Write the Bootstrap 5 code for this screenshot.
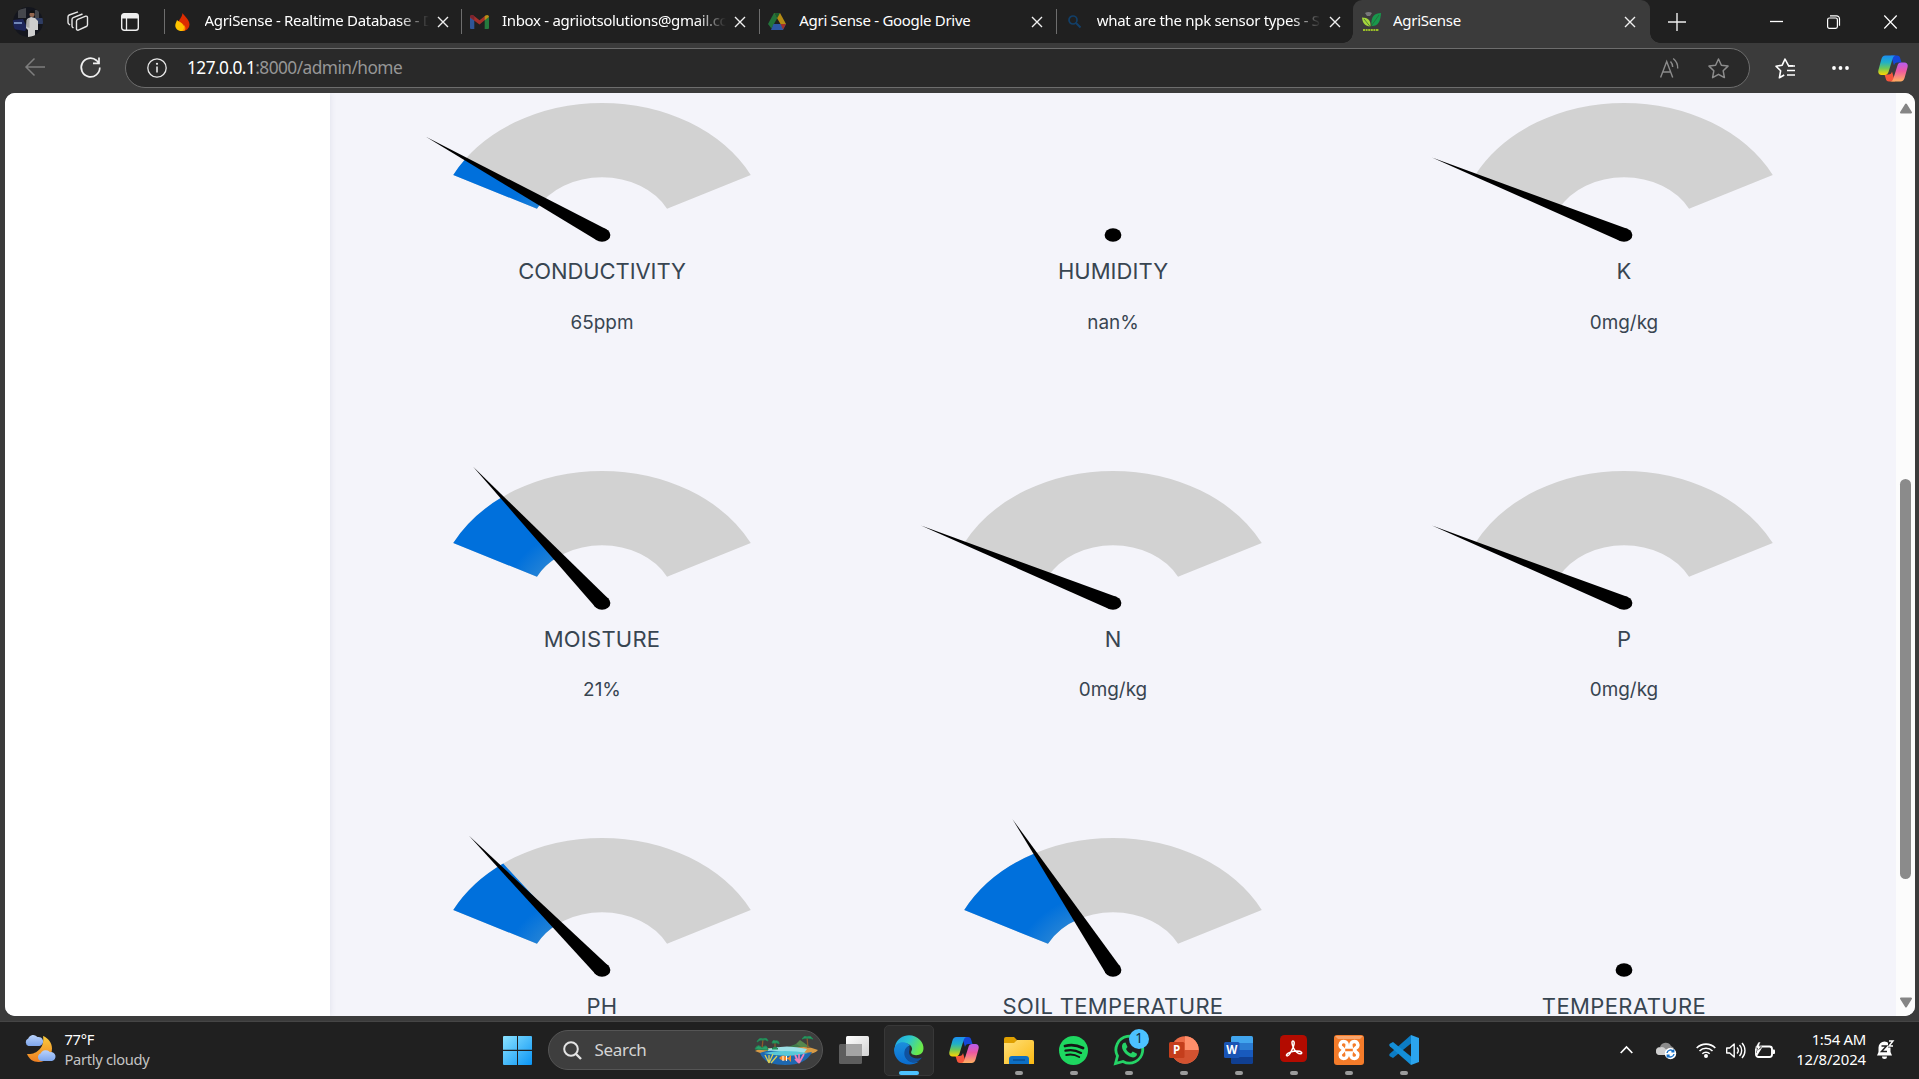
<!DOCTYPE html>
<html lang="en">
<head>
<meta charset="utf-8">
<title>AgriSense</title>
<link href="https://cdn.jsdelivr.net/npm/bootstrap@5.3.0/dist/css/bootstrap.min.css" rel="stylesheet">
<style>
html,body{height:100%;overflow:hidden}
body{font-family:"Noto Sans","Open Sans",sans-serif;background:#3b3b3b;color:#fff}
svg{display:block;flex:none;overflow:visible}
.desk{width:1919px;height:1079px}
.titlebar{height:43px;background:#202020}
.ctr{display:flex;align-items:center;justify-content:center;flex:none}
.tight{letter-spacing:-.3px}
.tab{width:297.4px;height:43px;padding-left:9px;font-size:15px;flex:none;position:relative}
.tab::before{content:"";position:absolute;left:0;top:9px;width:1px;height:25px;background:#6e6e6e}
.tab .fav{width:19px;margin-right:12.5px}
.tab .ttl{width:224px;white-space:nowrap;overflow:hidden;line-height:20px;margin-top:-3px;letter-spacing:-.3px}
.tab.fade-end .ttl{-webkit-mask-image:linear-gradient(90deg,#000 195px,transparent 224px);mask-image:linear-gradient(90deg,#000 195px,transparent 224px)}
.tab .cls{width:26px;margin-left:1px}
.tab.current{background:#3b3b3b;border-radius:9px 9px 0 0;width:297px;margin-left:-1px}
.tab.current::before{display:none}
.tab.current .cls{margin-left:0}
.tab.current .curve{position:absolute;bottom:0;width:10px;height:10px}
.curve.l{left:-10px;background:radial-gradient(circle at 0 0,transparent 9.5px,#3b3b3b 10px)}
.curve.r{right:-10px;background:radial-gradient(circle at 100% 0,transparent 9.5px,#3b3b3b 10px)}
.toolbar{height:50px;background:#3b3b3b;padding-top:5px}
.address{width:1625px;height:40px;flex:none;border:1px solid #6d6d6d;border-radius:20px;background:#292929;font-size:17.3px}
.address .port{color:#969696}
.page{margin:0 4px 0 5px;height:923px;border-radius:10px;background:#f4f4fa;overflow:hidden;color:#384551;font-family:Inter,"Liberation Sans",sans-serif}
.sidebar{width:325px;background:#fff;flex:none;box-shadow:0 0 6px rgba(80,90,120,.13);position:relative}
.main{width:1566px;padding:0 16.5px;height:923px;overflow:hidden}
.cell{height:367.5px}
.cell h5{font-size:22px;line-height:27px;font-weight:400;margin:15px 0 23.5px;color:#384551}
.cell p{font-size:18.9px;line-height:27px;margin:0}
.sbar{width:19px;background:#fcfcfc;padding:10px 0 8px}
.thumb{width:11px;height:400px;border-radius:5.5px;background:#8b8b8b;margin-top:365px}
.taskbar{height:58px;margin-top:5px;background:#202020;border-top:1px solid #454545;padding-bottom:1px}
.weather{width:490px;padding-left:24px;font-size:14.7px;line-height:20px}
.weather small{color:#c4c4c4;font-size:14.7px}
.lift{margin-top:-3px}
.app{width:55px;height:56px;position:relative}
.app.run::after{content:"";position:absolute;left:23.5px;bottom:3px;width:8px;height:4px;border-radius:2px;background:#9b9b9b}
.app.on::before{content:"";position:absolute;inset:3px 2.5px 2px;border-radius:5px;background:#2c2c2c;border:1px solid #383838}
.app.on::after{width:20px;left:17.5px;background:#4cc2ff}
.app svg{position:relative}
.count{position:absolute;left:28px;top:7px;width:20px;height:20px;border-radius:50%;background:#4cc2ff;color:#102a3a;font-size:13.5px;line-height:19px;text-align:center}
.search{width:275px;height:40px;margin:0 3px;border-radius:20px;background:#3e3e3e;border:1px solid #555;padding:0 4px 0 14px;color:#d4d4d4;font-size:16.5px}
.clock{width:83px;font-size:14.9px;line-height:20px;text-align:right;white-space:nowrap}
</style>
</head>
<body>
<svg width="0" height="0" class="position-absolute">
<defs>
<radialGradient id="fillg" gradientUnits="userSpaceOnUse" cx="0" cy="0" r="166"><stop offset=".42" stop-color="#2483d6"/><stop offset=".6" stop-color="#0070dc"/></radialGradient>
<linearGradient id="ca" x1="0" y1="0" x2="0" y2="1"><stop stop-color="#1c8df0"/><stop offset=".35" stop-color="#20b0c8"/><stop offset=".65" stop-color="#6cc85a"/><stop offset="1" stop-color="#ffd400"/></linearGradient>
<linearGradient id="cb" x1="0" y1="0" x2="0" y2="1"><stop stop-color="#b65cf0"/><stop offset=".45" stop-color="#ee58a0"/><stop offset="1" stop-color="#ffb060"/></linearGradient>
<linearGradient id="wa" gradientUnits="userSpaceOnUse" x1="0" y1="0" x2="29" y2="29"><stop stop-color="#8be2ff"/><stop offset="1" stop-color="#0a95f5"/></linearGradient>
<linearGradient id="ea" x1="0" y1="0" x2="1" y2=".4"><stop stop-color="#1f9fe8"/><stop offset=".5" stop-color="#2bc6cf"/><stop offset="1" stop-color="#6bea4a"/></linearGradient>
<linearGradient id="eb" x1="0" y1="0" x2="0" y2="1"><stop stop-color="#1b8fdc"/><stop offset="1" stop-color="#0a6cd0"/></linearGradient>
<linearGradient id="fa" x1="0" y1="0" x2="1" y2="1"><stop stop-color="#ffe07a"/><stop offset="1" stop-color="#fbb912"/></linearGradient>
<linearGradient id="ma" x1="0" y1="0" x2="0" y2="1"><stop stop-color="#f9cb3c"/><stop offset="1" stop-color="#ee7f22"/></linearGradient>
<linearGradient id="cl" x1="0" y1="0" x2="0" y2="1"><stop stop-color="#b9d2fb"/><stop offset="1" stop-color="#7ea6ec"/></linearGradient>
<linearGradient id="tv" x1="0" y1="0" x2="1" y2="1"><stop stop-color="#fff"/><stop offset="1" stop-color="#d2d2d2"/></linearGradient>
<symbol id="x" viewBox="0 0 12 12"><path d="M1 1l10 10M11 1L1 11" stroke="#f0f0f0" stroke-width="1.4" fill="none"/></symbol>
<symbol id="copilot" viewBox="0 0 30 28">
<path d="M13 1h6c2 0 2.700 1 3.200 2.700L23.500 8h-4c-2 0-3 1-3.500 3z" fill="#1547d8"/>
<path d="M17 27h-6c-2 0-2.700-1-3.200-2.700L6.500 20h4c2 0 3-1 3.500-3z" fill="#f5553c"/>
<path d="M7.500 1H18c-2 0-2.800 1.300-3.400 3.300l-4 13c-.6 2-1.800 3.200-3.900 3.200H3.500C.8 20.500-.3 18 .5 15.200L3.300 5C4 2.300 5.200 1 7.500 1z" fill="url(#ca)"/>
<path d="M22.500 27H12c2 0 2.800-1.300 3.400-3.300l4-12.500C20 9.200 21.200 8 23.300 8h3.200c2.700 0 3.800 2.300 3 5l-2.800 10c-.7 2.700-1.900 4-4.200 4z" fill="url(#cb)"/></symbol>
</defs>
</svg>

<div class="desk d-flex flex-column">
<header class="titlebar d-flex align-items-center">
  <div class="ctr" style="width:55px"><svg width="30" height="30" viewBox="0 0 30 30"><clipPath id="av"><circle cx="15" cy="15" r="15"/></clipPath><g clip-path="url(#av)"><path d="M0 0h30v30H0z" fill="#14161e"/><path d="M5 3l8-2v10H5zM22 3h4v9h-4z" fill="#45474c"/><path d="M0 13l10-1 4 8-2 4-12-2z" fill="#1d2558"/><path d="M1 15h8v2H1z" fill="#7087b8"/><path d="M23 11h7v6h-7z" fill="#2f3d63"/><path d="M14 12l4-2 4 1 3 3 0 9h-3v7h-7v-7l-2-2z" fill="#cfcfcf"/><path d="M13.500 13l3-2v10l-3-1z" fill="#a8a8a8"/><circle cx="19" cy="7.500" r="2.500" fill="#93674f"/><path d="M16.500 6a2.500 2.500 0 0 1 5 0z" fill="#111"/></g></svg></div>
  <div class="ctr" style="width:45px"><svg width="22" height="21" viewBox="0 0 22 21" fill="none" stroke="#e6e6e6" stroke-width="1.400"><path d="M9.500 10.200a2 2 0 0 1 1.200-1.800l8-3.200a1.300 1.300 0 0 1 1.800 1.200v7.300a2 2 0 0 1-1.200 1.800l-8 3.600a1.300 1.300 0 0 1-1.800-1.200zM6.500 17l-1-.8a2 2 0 0 1-.5-1.400V8.500a2 2 0 0 1 1.200-1.800L15.500 3M3 14l-1.200-1A2 2 0 0 1 1 11.300V5.800A2 2 0 0 1 2.200 4L11 .8"/></svg></div>
  <div class="ctr" style="width:64px;padding-right:4px"><svg width="18" height="18" viewBox="0 0 18 18"><rect x=".7" y=".7" width="16.600" height="16.600" rx="2.500" fill="none" stroke="#eee" stroke-width="1.400"/><path d="M.7 5.500V3A2.400 2.400 0 0 1 3 .7h12A2.400 2.400 0 0 1 17.300 3v2.500z" fill="#eee"/><path d="M5.500 5v12" stroke="#eee" stroke-width="1.300"/></svg></div>

  <div class="tab fade-end d-flex align-items-center"><div class="fav ctr"><svg width="15" height="18" viewBox="0 0 15 18"><path d="M7.500 0C8 2 14.500 6 14.500 11.500A6.500 6.500 0 0 1 7.500 18C4 18 2 14 3 10c.5-3 4-5 4.500-10z" fill="#dd2c00"/><path d="M2 7c1 1.500 5 2 7 6 1 2 .5 4-1.500 5C3 18.500 0 15.500.3 12 .5 10 1.500 9 2 7z" fill="#ffc400"/><path d="M6 10c3 1 4.500 4 1.500 8l2-.3c2-2 1-6-3.500-7.700z" fill="#ff9100"/></svg></div><span class="ttl">AgriSense - Realtime Database - Data</span><div class="cls ctr"><svg width="12" height="12"><use href="#x"/></svg></div></div>
  <div class="tab fade-end d-flex align-items-center"><div class="fav ctr"><svg width="19" height="14" viewBox="0 0 19 14"><path d="M0 2v11q0 1 1 1h3.300V5z" fill="#2f5596"/><path d="M19 2v11q0 1-1 1h-3.300V5z" fill="#257a3e"/><path d="M0 2C0 0 2-.6 3.500.6l6 4.700 6-4.700v4L9.500 9.500 0 2.500z" fill="#a3302a"/><path d="M14.700 5.300V1.200l.8-.6C17-.6 19 0 19 2z" fill="#b88f16"/><path d="M0 2C0 0 2-.6 3.500.6l.8.600v4.100z" fill="#7b2430"/></svg></div><span class="ttl">Inbox - agriiotsolutions@gmail.com</span><div class="cls ctr"><svg width="12" height="12"><use href="#x"/></svg></div></div>
  <div class="tab d-flex align-items-center"><div class="fav ctr"><svg width="18" height="17" viewBox="0 0 18 17"><path d="M6 0h3l0 5.500L3.500 15.500 0 11z" fill="#22733a"/><path d="M6 0h6l6 11h-5.500z" fill="#b58b14"/><path d="M6 0L9 5.500 12 0z" fill="#1b5c2e"/><path d="M5.500 11H18l-3 6H3z" fill="#2d58a5"/><path d="M12.500 11H18l-3 5.500z" fill="#a3302a"/></svg></div><span class="ttl">Agri Sense - Google Drive</span><div class="cls ctr"><svg width="12" height="12"><use href="#x"/></svg></div></div>
  <div class="tab fade-end d-flex align-items-center"><div class="fav ctr"><svg width="13" height="13" viewBox="0 0 13 13" fill="none" stroke="#123f68" stroke-width="1.700"><circle cx="5" cy="5" r="4"/><path d="M8 8l4.500 4.500" stroke-width="2"/></svg></div><span class="ttl">what are the npk sensor types - Search</span><div class="cls ctr"><svg width="12" height="12"><use href="#x"/></svg></div></div>
  <div class="tab current d-flex align-items-center"><i class="curve l"></i><i class="curve r"></i><div class="fav ctr"><svg width="19" height="20" viewBox="0 0 19 20"><path d="M3 1q3.500-2 7 0L8 4H5z" fill="#77777a"/><path d="M19 1C13 1 8.500 4 9.500 14c6 .5 9-4 9.500-13z" fill="#18984c"/><path d="M0 5.500c6 0 9 3 8.500 9C3 14.500.5 11 0 5.500z" fill="#a5d63c"/><path d="M2 7l6.500 8L17 3" stroke="#2c5c34" fill="none" stroke-width=".7"/><path d="M1 18h16" stroke="#9bbf28" stroke-width="2" stroke-dasharray="2 .6"/></svg></div><span class="ttl">AgriSense</span><div class="cls ctr"><svg width="12" height="12"><use href="#x"/></svg></div></div>

  <div class="ctr" style="width:54px"><svg width="18" height="18" viewBox="0 0 18 18"><path d="M9 0v18M0 9h18" stroke="#eee" stroke-width="1.400"/></svg></div>
  <div class="ms-auto d-flex">
    <div class="ctr" style="width:57px"><svg width="13" height="13"><path d="M0 6.500h13" stroke="#fff" stroke-width="1.300"/></svg></div>
    <div class="ctr" style="width:57px"><svg width="13" height="14" viewBox="0 0 13 14" fill="none" stroke="#fff" stroke-width="1.200"><rect x=".6" y="3" width="9.800" height="10.400" rx="1.800"/><path d="M3 .8h6.500a3 3 0 0 1 3 3v7"/></svg></div>
    <div class="ctr" style="width:57px"><svg width="13" height="14" viewBox="0 0 13 14"><path d="M.3.500l12.400 13M12.700.500L.3 13.500" stroke="#fff" stroke-width="1.200"/></svg></div>
  </div>
</header>

<nav class="toolbar d-flex align-items-start">
  <div class="ctr" style="width:70px;height:38px"><svg width="20" height="18" viewBox="0 0 20 18" fill="none" stroke="#7e7e7e" stroke-width="1.500"><path d="M20 9H1M9.500.5L1 9l8.500 8.500"/></svg></div>
  <div class="ctr" style="width:40px;height:39px"><svg width="21" height="21" viewBox="0 0 21 21" fill="none" stroke="#f0f0f0" stroke-width="1.700"><path d="M19.800 10.500A9.300 9.300 0 1 1 16.600 3.500L18.500 5.500M19 .5v5.800h-6"/></svg></div>
  <div class="address d-flex align-items-center" style="margin-left:15px">
    <div class="ctr" style="width:61px"><svg width="20" height="20" viewBox="0 0 20 20"><circle cx="10" cy="10" r="9.200" fill="none" stroke="#e8e8e8" stroke-width="1.300"/><path d="M10 8.500V14.500" stroke="#e8e8e8" stroke-width="1.600"/><circle cx="10" cy="5.800" r="1.100" fill="#e8e8e8"/></svg></div>
    <div class="text-nowrap" style="letter-spacing:-.55px">127.0.0.1<span class="port">:8000/admin/home</span></div>
    <div class="ms-auto ctr" style="width:49px"><svg width="19" height="20" viewBox="0 0 19 20" fill="none" stroke="#8c8c8c" stroke-width="1.400"><path d="M.6 19.500L6.700 3.500l6 16M2.800 14h7.800M10.500 3.500a8 8 0 0 1 2.200 5.500M13.200.500a12 12 0 0 1 4.500 10"/></svg></div>
    <div class="ctr" style="width:49px;margin-right:6px"><svg width="21" height="21" viewBox="0 0 21 21"><path d="M10.500 1l2.900 6.200 6.600.9-4.800 4.700 1.200 6.800-5.900-3.300-5.900 3.300 1.200-6.800L1 8.100l6.600-.9z" fill="none" stroke="#8c8c8c" stroke-width="1.500" stroke-linejoin="round"/></svg></div>
  </div>
  <div class="ctr" style="width:70px;height:40px"><svg width="20" height="21" viewBox="0 0 20 21" fill="none" stroke="#fff" stroke-width="1.600" stroke-linejoin="round"><path d="M18 7.700h-4.500L10 1 7.200 7.200 1 8.200l4.600 4.600-1.200 7 4.800-2.800"/><path d="M13 8h7M12 12.500h8M12 17h8"/></svg></div>
  <div class="ctr" style="width:40px;height:39px"><svg width="17" height="4"><g fill="#fff"><circle cx="2" cy="2" r="1.900"/><circle cx="8.500" cy="2" r="1.900"/><circle cx="15" cy="2" r="1.900"/></g></svg></div>
  <div class="ctr" style="width:59px;height:40px;padding-left:7px"><svg width="30" height="29" viewBox="0 0 30 28"><use href="#copilot" width="30" height="28"/></svg></div>
</nav>

<main class="page d-flex">
  <aside class="sidebar"></aside>
  <section class="main">
    <div class="row g-0 text-center" id="gauges"></div>
  </section>
  <div class="sbar d-flex flex-column align-items-center">
    <svg width="12" height="11"><path d="M6 1.500L11 9.500H1z" fill="#858585" stroke="#858585" stroke-width="2" stroke-linejoin="round"/></svg>
    <div class="thumb"></div>
    <svg class="mt-auto" width="12" height="11"><path d="M6 9.500L11 1.500H1z" fill="#858585" stroke="#858585" stroke-width="2" stroke-linejoin="round"/></svg>
  </div>
</main>

<footer class="taskbar d-flex align-items-center">
  <div class="weather d-flex align-items-center">
    <svg style="margin-top:-3px" width="31" height="29" viewBox="0 0 31 29"><path d="M19 2c5 2 9 6.500 9 12.500a13.500 13.500 0 0 1-13.500 13.500C9 28 5 25 3 20c9 1 18-6 16-18z" fill="url(#ma)"/><path d="M4.500 12a4 4 0 0 1-.3-7.500A5.500 5.500 0 0 1 13.500 3a4.600 4.600 0 0 1 2 9z" fill="url(#cl)"/><path d="M17 27a3.900 3.900 0 0 1-.3-7.500 5.500 5.500 0 0 1 9.300-1.300A4.500 4.500 0 0 1 28 27z" fill="url(#cl)"/></svg>
    <div class="lift tight" style="margin-left:9.500px"><div>77°F</div><small class="d-block">Partly cloudy</small></div>
  </div>
  <div class="app ctr"><svg width="29" height="29" viewBox="0 0 29 29" fill="url(#wa)"><path d="M1 0h13v13.800H0V1q0-1 1-1zM15 0h13q1 0 1 1v12.800H15zM0 15h14v14H1q-1 0-1-1zM15 15h14v13q0 1-1 1H15z"/></svg></div>
  <div class="search d-flex align-items-center">
    <svg width="19" height="19" viewBox="0 0 19 19" fill="none" stroke="#e4e4e4" stroke-width="2"><circle cx="8" cy="8" r="6.800"/><path d="M13 13l5 5" stroke-width="2.400"/></svg>
    <span class="tight" style="margin-left:12.500px;font-size:17px">Search</span>
    <svg class="ms-auto" width="63" height="30" viewBox="0 0 63 30"><path d="M38 12l7-7 10 7z" fill="#55864c"/><path d="M33 12l8-3 5 3z" fill="#3f7a4a"/><path d="M0 16q8-5 20-2l20-1q12-3 23 2-3 4-12 4L8 19z" fill="#d69a45"/><path d="M12 14q20-5 40 0l-3 4H14z" fill="#9ce0e6"/><path d="M5 18q8-4 22-1t30 0q-6 13-27 13T5 18z" fill="#1e68b0"/><path d="M9 18q20-4 44 0-20 6-44 0z" fill="#58c8d8"/><path d="M7 14L8 4M20 13V6M53 13L52 2" stroke="#8c5a2c" stroke-width="1.300"/><path d="M2 7q2-5 6-3 4-2 5 2-3-2-5-1-3-1-6 2zM17 8q1-4 3-2 4-1 4 3-2-2-4-1zM47 4q2-4 5-2 4-2 6 2-3-1-6-1-3 0-5 1zM0 14q3-6 7-1 5-5 6 2zM17 14q3-4 6 0z" fill="#2aa06a" stroke="#228855"/><path d="M10 20l4 8m0-8v8m4-9l-4 9m8-7l-6 7" stroke="#d8cf58" stroke-width="1.300"/><path d="M40 20l4 8m0-9v9m5-9l-5 9m-4-4l4 4" stroke="#ef7fb8" stroke-width="1.700"/><path d="M24 23q4-5 9 0l3-3v7l-3-3q-5 4-9-1z" fill="#f58a27"/><path d="M28 21v5M31.500 21v5" stroke="#fff"/></svg>
  </div>
  <div class="app ctr"><svg width="30" height="28" viewBox="0 0 30 28"><rect x="7" y="0" width="23" height="20" rx="1.500" fill="url(#tv)"/><rect x="0" y="8" width="23" height="20" rx="1.500" fill="#6a6a6a" fill-opacity=".85"/><path d="M7 8h16v12H7z" fill="#a4a4a4"/></svg></div>
  <div class="app on run ctr"><svg width="30" height="30" viewBox="0 0 30 30"><path d="M1 11C4-1 19-3 26 5c5 5 5 14-2 15-5 .7-8-1.500-6.500-4 2-3-1-7-5.500-7.500C7 8 3 10 .5 15z" fill="url(#ea)"/><path d="M0 15C1 8 7 6.500 11 7.500c4 1 5 3 4.500 3.500-5 1-7 12 1 15.500 3 1.200 6 1 8.500 0C16 33 .5 29 0 15z" fill="url(#eb)"/><path d="M15.500 11c-6 1-8 12 1 16 4 1.500 8 0 11.500-4.500-7 3-15-1-12.500-8z" fill="#10529f"/></svg></div>
  <div class="app ctr"><svg width="30" height="28"><use href="#copilot" width="30" height="28"/></svg></div>
  <div class="app run ctr"><svg width="30" height="27" viewBox="0 0 30 27"><path d="M0 2q0-2 2-2h8l3 3-2 4H0z" fill="#dfa000"/><path d="M0 6h10l3-3h15q2 0 2 2v22H0z" fill="url(#fa)"/><path d="M5 27v-5q0-3 3-3h14q3 0 3 3v5z" fill="#0d6fc4"/><path d="M9 23h12" stroke="#084a8c" stroke-width="1.300"/></svg></div>
  <div class="app run ctr"><svg width="29" height="29" viewBox="0 0 29 29"><circle cx="14.500" cy="14.500" r="14.500" fill="#1ed760"/><g fill="none" stroke="#151515" stroke-linecap="round"><path d="M6 10q9-2.500 18 2" stroke-width="2.800"/><path d="M6.500 14.700q8-2 15.500 2.200" stroke-width="2.300"/><path d="M7.200 19q7-1.500 13 2" stroke-width="1.900"/></g></svg></div>
  <div class="app run ctr"><svg width="30" height="30" viewBox="0 0 30 30"><path d="M1.500 28.500l2-7.500A13.400 13.400 0 1 1 9 26.500z" fill="none" stroke="#25d366" stroke-width="2.800"/><path d="M9.500 8l2-.5 2 4.500-1.500 2c1 2 2.500 3.500 5 4.500l1.700-2 4.300 2.200c0 2.500-2 3.800-4 3.800-5-.5-11-6-11-11 0-1.500.5-2.700 1.500-3.500z" fill="#25d366"/></svg><span class="count">1</span></div>
  <div class="app run ctr"><svg width="30" height="28" viewBox="0 0 30 28"><circle cx="16" cy="14" r="13.700" fill="#ed6c47"/><path d="M16 .3A13.700 13.700 0 0 1 29.700 14H16z" fill="#ff8f6b"/><path d="M29.700 14A13.700 13.700 0 0 1 4 20.500L16 14z" fill="#d35230"/><rect x="0" y="6" width="15.500" height="16" rx="1.500" fill="#c43e1c"/><text x="7.500" y="18" text-anchor="middle" font-size="11.500" font-weight="700" fill="#fff" font-family="Open Sans">P</text></svg></div>
  <div class="app run ctr"><svg width="29" height="28" viewBox="0 0 29 28"><path d="M7 1.500Q7 0 8.500 0h19Q29 0 29 1.500V7H7z" fill="#41a5ee"/><path d="M7 7h22v7H7z" fill="#2b7cd3"/><path d="M7 14h22v7H7z" fill="#185abd"/><path d="M7 21h22v5.500q0 1.500-1.500 1.500h-19Q7 28 7 26.500z" fill="#103f91"/><rect x="0" y="6" width="15.500" height="16" rx="1.500" fill="#1a54b4"/><text x="7.700" y="18" text-anchor="middle" font-size="11.500" font-weight="700" fill="#fff" font-family="Open Sans">W</text></svg></div>
  <div class="app run ctr" style="padding-bottom:3px"><svg width="27" height="27" viewBox="0 0 27 27"><rect width="27" height="27" rx="4.500" fill="#b30b00"/><path d="M13 6c-1.500 0-1.300 3 .5 7 1.700 3.700 5 6.200 7.500 5.700 1.500-.5 1-2.700-4-2.700-4 0-10 1.700-10.500 4-.2 1.300 1.800 1.500 3.500-1.500 2-3.500 4.500-8.500 4.200-10.800C14 6.500 13.600 6 13 6z" fill="none" stroke="#fff" stroke-width="1.500"/></svg></div>
  <div class="app run ctr"><svg width="30" height="30" viewBox="0 0 30 30"><rect width="30" height="30" rx="3" fill="#f57c2a"/><path d="M1 1h28l-3 3H4z" fill="#f7a56e"/><path d="M13 12c1-4-1-5.500-3.500-5.500S5.500 9 6.500 11.500C7.500 13 9 13 9.500 15c-.5 2-2 2-3 3.500-1 2.500.5 5 3 5s4.500-1.500 3.500-5.500h4c-1 4 1 5.500 3.500 5.500s4-2.500 3-5c-1-1.500-2.500-1.500-3-3.500.5-2 2-2 3-3.500 1-2.500-.5-5-3-5S16 8 17 12z" fill="none" stroke="#fff" stroke-width="3.600"/></svg></div>
  <div class="app run ctr"><svg width="30" height="30" viewBox="0 0 30 30"><path d="M22 0l8 3v24l-8 3z" fill="#2ba4ee"/><path d="M22 0v8.500L4 23 .8 21.300q-1.300-1.200 0-2.600z" fill="#0c7cc4"/><path d="M22 30v-8.500L4 7 .8 8.700q-1.300 1.200 0 2.600z" fill="#148fd8"/></svg></div>

  <div class="ms-auto d-flex align-items-center" style="padding-right:22px">
    <div class="ctr" style="width:38px"><svg width="13" height="8" viewBox="0 0 13 8"><path d="M.7 7l5.800-6 5.800 6" fill="none" stroke="#fff" stroke-width="1.700"/></svg></div>
    <div class="ctr" style="width:41px"><svg width="20" height="17" viewBox="0 0 20 17"><path d="M4 13a4 4 0 0 1 0-8 6 6 0 0 1 11-1 5 5 0 0 1 1 9z" fill="#8b8b8b"/><path d="M3.500 13a3.700 3.700 0 0 1 .5-7.500q3-1.500 6 2l3 5.500z" fill="#cfcfcf"/><circle cx="14.500" cy="11.500" r="5.700" fill="#fff"/><path d="M11 11a3.600 3.600 0 0 1 6.500-1.500m.2-2v2.300h-2.300M18 12a3.600 3.600 0 0 1-6.500 1.500m-.2 2v-2.300h2.300" fill="none" stroke="#1570c8" stroke-width="1.400"/></svg></div>
    <div class="ctr" style="width:39px"><svg width="20" height="16" viewBox="0 0 20 16" fill="none" stroke="#fff" stroke-width="1.600"><path d="M.7 6a13 13 0 0 1 18.600 0M3.500 9a9.200 9.200 0 0 1 13 0M6.300 11.700a5.300 5.300 0 0 1 7.400 0"/><circle cx="10" cy="14" r="1.200" fill="#fff"/></svg></div>
    <div class="ctr" style="width:22px"><svg width="20" height="17" viewBox="0 0 20 17" fill="none" stroke="#fff" stroke-width="1.400" stroke-linejoin="round"><path d="M.7 6v5h3l4.500 4V2L3.700 6zM11 5.500a4.500 4.500 0 0 1 0 6M13.500 3a8 8 0 0 1 0 11M16 1a11 11 0 0 1 0 15"/></svg></div>
    <div class="ctr" style="width:36px"><svg width="20" height="17" viewBox="0 0 20 17"><rect x="1" y="4.500" width="16" height="10.500" rx="2.500" fill="none" stroke="#fff" stroke-width="1.900"/><path d="M18 7.500h1q1 0 1 1v2.500q0 1-1 1h-1z" fill="#fff"/><path d="M3.500 0L0 6h2.500L1.500 10.500 6.500 4H4L5.500 0z" fill="#fff" stroke="#202020" stroke-width=".5"/><path d="M2 14V9l5.500-4z" fill="#fff"/></svg></div>
    <div class="clock lift tight"><div>1:54 AM</div><div style="letter-spacing:-.1px">12/8/2024</div></div>
    <div class="ctr" style="width:31px;padding-left:7px"><svg width="17" height="20" viewBox="0 0 17 20"><path d="M7.500 1.500a6 6 0 0 1 6 6V12l1.500 3.500H0L1.500 12V7.500a6 6 0 0 1 6-6zM5 16.500h5a2.500 2.500 0 0 1-5 0z" fill="#fff"/><path d="M11 0h6v7.500h-6z" fill="#202020"/><path d="M4.500 6h5L4.500 11.500h5.500" fill="none" stroke="#202020" stroke-width="1.500"/><path d="M12 1H16l-4 5H16" fill="none" stroke="#fff" stroke-width="1.400"/></svg></div>
  </div>
</footer>
</div>

<script src="https://cdn.jsdelivr.net/npm/bootstrap@5.3.0/dist/js/bootstrap.bundle.min.js"></script>
<script>
// name, reading, filled share of the arc (%), needle angle in degrees, letter spacing of the name
const gauges = [
  ["CONDUCTIVITY","65ppm",6.5,35.2,-.08],
  ["HUMIDITY","nan%",null,null,.05],
  ["K","0mg/kg",0,27,0],
  ["MOISTURE","21%",21,53.2,.25],
  ["N","0mg/kg",0,27,0],
  ["P","0mg/kg",0,27,0],
  ["PH","",21.2,51.9,.2],
  ["SOIL TEMPERATURE","",27.9,62.2,.34],
  ["TEMPERATURE","",null,null,.4]
];
const arc = "M-106.900-54.500A120 120 0 0 1 106.900-54.500";
document.getElementById("gauges").innerHTML = gauges.map(([name,val,pct,ang,ls]) => `
  <div class="col-4 cell">
    <svg class="mx-auto" width="440" height="150" viewBox="-220 -142 440 150"><g transform="scale(1 .791)">
      ${pct === null ? "" : `<path d="${arc}" fill="none" stroke="#d2d2d2" stroke-width="94"/>`}
      ${pct ? `<path d="${arc}" fill="none" stroke="url(#fillg)" stroke-width="94" pathLength="100" stroke-dasharray="${pct} 200"/>` : ""}
      ${ang === null ? "" : `<path d="M0-8.400L-215.500 0L0 8.400z" transform="rotate(${ang})"/>`}
      <circle r="8.400"/></g></svg>
    <h5 style="letter-spacing:${ls}px">${name}</h5><p>${val}</p>
  </div>`).join("");
</script>
</body>
</html>
